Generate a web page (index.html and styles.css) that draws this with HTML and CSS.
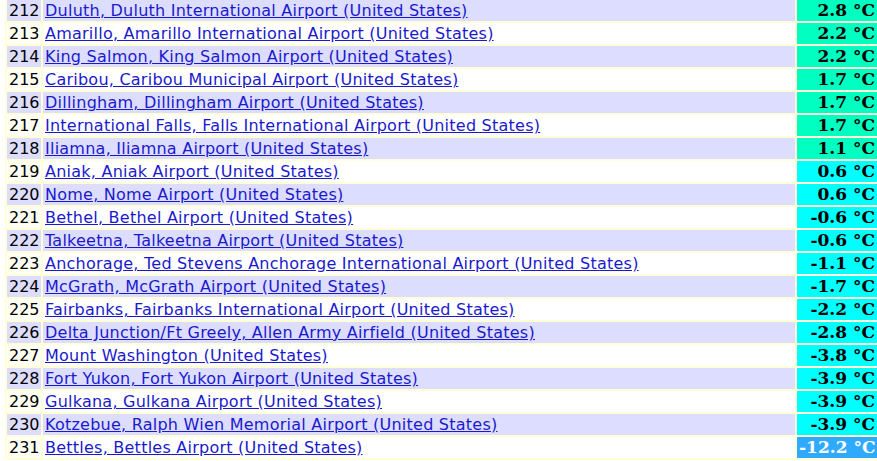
FILE: index.html
```html
<!DOCTYPE html>
<html lang="en">
<head>
  <meta charset="UTF-8">
  <title>Coldest airports</title>
  <link rel="stylesheet" href="styles.css">
</head>
<body>

  <table class="ranking">
    <tbody>
      <tr class="odd"><td class="pos">212</td><td class="name"><a href="#">Duluth, Duluth International Airport (United States)</a></td><td class="temp t-green">2.8 °C</td></tr>
      <tr class="even"><td class="pos">213</td><td class="name"><a href="#">Amarillo, Amarillo International Airport (United States)</a></td><td class="temp t-green">2.2 °C</td></tr>
      <tr class="odd"><td class="pos">214</td><td class="name"><a href="#">King Salmon, King Salmon Airport (United States)</a></td><td class="temp t-green">2.2 °C</td></tr>
      <tr class="even"><td class="pos">215</td><td class="name"><a href="#">Caribou, Caribou Municipal Airport (United States)</a></td><td class="temp t-green">1.7 °C</td></tr>
      <tr class="odd"><td class="pos">216</td><td class="name"><a href="#">Dillingham, Dillingham Airport (United States)</a></td><td class="temp t-green">1.7 °C</td></tr>
      <tr class="even"><td class="pos">217</td><td class="name"><a href="#">International Falls, Falls International Airport (United States)</a></td><td class="temp t-green">1.7 °C</td></tr>
      <tr class="odd"><td class="pos">218</td><td class="name"><a href="#">Iliamna, Iliamna Airport (United States)</a></td><td class="temp t-green">1.1 °C</td></tr>
      <tr class="even"><td class="pos">219</td><td class="name"><a href="#">Aniak, Aniak Airport (United States)</a></td><td class="temp t-cyan">0.6 °C</td></tr>
      <tr class="odd"><td class="pos">220</td><td class="name"><a href="#">Nome, Nome Airport (United States)</a></td><td class="temp t-cyan">0.6 °C</td></tr>
      <tr class="even"><td class="pos">221</td><td class="name"><a href="#">Bethel, Bethel Airport (United States)</a></td><td class="temp t-cyan">-0.6 °C</td></tr>
      <tr class="odd"><td class="pos">222</td><td class="name"><a href="#">Talkeetna, Talkeetna Airport (United States)</a></td><td class="temp t-cyan">-0.6 °C</td></tr>
      <tr class="even"><td class="pos">223</td><td class="name"><a href="#">Anchorage, Ted Stevens Anchorage International Airport (United States)</a></td><td class="temp t-cyan">-1.1 °C</td></tr>
      <tr class="odd"><td class="pos">224</td><td class="name"><a href="#">McGrath, McGrath Airport (United States)</a></td><td class="temp t-cyan">-1.7 °C</td></tr>
      <tr class="even"><td class="pos">225</td><td class="name"><a href="#">Fairbanks, Fairbanks International Airport (United States)</a></td><td class="temp t-cyan">-2.2 °C</td></tr>
      <tr class="odd"><td class="pos">226</td><td class="name"><a href="#">Delta Junction/Ft Greely, Allen Army Airfield (United States)</a></td><td class="temp t-cyan">-2.8 °C</td></tr>
      <tr class="even"><td class="pos">227</td><td class="name"><a href="#">Mount Washington (United States)</a></td><td class="temp t-cyan">-3.8 °C</td></tr>
      <tr class="odd"><td class="pos">228</td><td class="name"><a href="#">Fort Yukon, Fort Yukon Airport (United States)</a></td><td class="temp t-cyan">-3.9 °C</td></tr>
      <tr class="even"><td class="pos">229</td><td class="name"><a href="#">Gulkana, Gulkana Airport (United States)</a></td><td class="temp t-cyan">-3.9 °C</td></tr>
      <tr class="odd"><td class="pos">230</td><td class="name"><a href="#">Kotzebue, Ralph Wien Memorial Airport (United States)</a></td><td class="temp t-cyan">-3.9 °C</td></tr>
      <tr class="even"><td class="pos">231</td><td class="name"><a href="#">Bettles, Bettles Airport (United States)</a></td><td class="temp t-blue">-12.2 °C</td></tr>
    </tbody>
  </table>

</body>
</html>
```

FILE: styles.css
```css
body {
  margin: 0;
  background-color: #ffffff;
  font-family: "DejaVu Sans", Verdana, sans-serif;
  font-size: 16px;
  overflow: hidden;
}
.ranking {
  width: 874px;
  margin: -2px 0 0 5px;
  border-spacing: 2px;
  background-color: #ffffd8;
  table-layout: fixed;
}
.ranking td {
  height: 19px;
  padding: 1px 2px;
  line-height: 19px;
  white-space: nowrap;
}
.pos {
  width: 30px;
  text-align: right;
  color: #000000;
}
.name {
  letter-spacing: 0.24px;
}
.name a {
  color: #1a1acc;
}
.odd td {
  background-color: #ddddff;
}
.even td {
  background-color: #ffffff;
}
.even .pos {
  background-color: #fffff4;
}
.temp {
  width: 76px;
  text-align: right;
  font-family: "DejaVu Serif", "Liberation Serif", serif;
  font-size: 17px;
  font-weight: bold;
  overflow: hidden;
}
.ranking .t-green {
  background-color: #00ffc0;
}
.ranking .t-cyan {
  background-color: #00ffff;
}
.ranking .t-blue {
  background-color: #30aaff;
  color: #ffffff;
}
```
